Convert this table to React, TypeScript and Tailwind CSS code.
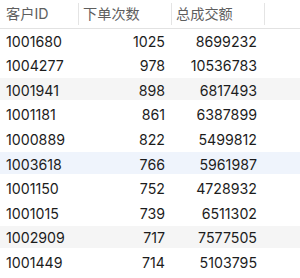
import React from 'react';

type Row = { id: string; orders: number; total: number };

const rows: Row[] = [
  { id: '1001680', orders: 1025, total: 8699232 },
  { id: '1004277', orders: 978, total: 10536783 },
  { id: '1001941', orders: 898, total: 6817493 },
  { id: '1001181', orders: 861, total: 6387899 },
  { id: '1000889', orders: 822, total: 5499812 },
  { id: '1003618', orders: 766, total: 5961987 },
  { id: '1001150', orders: 752, total: 4728932 },
  { id: '1001015', orders: 739, total: 6511302 },
  { id: '1002909', orders: 717, total: 7577505 },
  { id: '1001449', orders: 714, total: 5103795 },
];

// every third row is shaded, the sixth one is the selected (blue) row
const rowBg = (i: number) => {
  if (i === 5) return 'bg-[linear-gradient(to_bottom,#eff4fc_22px,transparent_22px)]';
  if (i % 3 === 2) return 'bg-[linear-gradient(to_bottom,#f5f5f5_22px,transparent_22px)]';
  return 'bg-white';
};

const App: React.FC = () => {
  return (
    <div className="w-[300px] h-[278px] overflow-hidden bg-white font-['Inter','Noto_Sans_CJK_SC',sans-serif] text-[#1c1c1c]">
      {/* header */}
      <div className="flex h-[29px] items-center border-b border-[#e2e2e2] text-[14.2px] text-[#5e5e5e]">
        <div className="w-[78px] pl-[6px]">客户ID</div>
        <div className="h-[22px] w-px bg-[#e4e4e4]" />
        <div className="w-[92px] pl-[4px]">下单次数</div>
        <div className="h-[22px] w-px bg-[#e4e4e4]" />
        <div className="w-[92px] pl-[4px]">总成交额</div>
        <div className="h-[22px] w-px bg-[#e4e4e4]" />
      </div>

      {/* body */}
      <div className="flex flex-col text-[14.2px]">
        {rows.map((r, i) => (
          <div key={r.id} className={`flex h-[24.6px] items-center ${rowBg(i)}`}>
            <div className="w-[78px] pl-[6px]">{r.id}</div>
            <div className="w-[92px] pr-[5px] text-right">{r.orders}</div>
            <div className="w-[92px] pr-[5px] text-right">{r.total}</div>
          </div>
        ))}
      </div>
    </div>
  );
};

export default App;
